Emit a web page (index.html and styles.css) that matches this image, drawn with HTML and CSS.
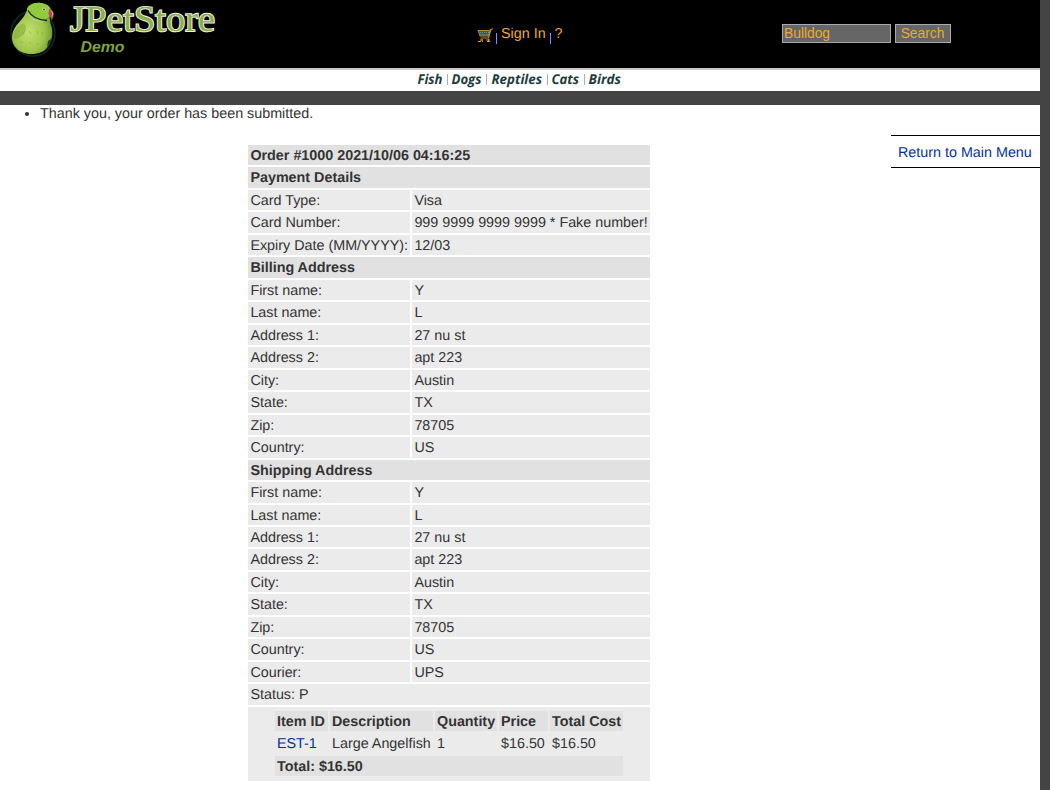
FILE: index.html
```html
<!DOCTYPE html>
<html lang="en">
<head>
<meta charset="utf-8">
<title>JPetStore Demo</title>
<link rel="stylesheet" href="styles.css">
</head>
<body>
<div class="page">
  <header class="header">
    <a class="logo">
      <svg width="230" height="66" viewBox="0 0 230 66">
        <defs>
          <radialGradient id="belly" cx=".42" cy=".58" r=".62">
            <stop offset="0" stop-color="#c3e070"/>
            <stop offset=".6" stop-color="#a0c64b"/>
            <stop offset="1" stop-color="#6b942f"/>
          </radialGradient>
        </defs>
        <ellipse cx="33" cy="33.500" rx="22" ry="22.500" fill="#04090a" stroke="#10272c" stroke-width="1.500"/>
        <path d="M27 10C27 5 34 2 41 3C48 4 52 8 51 13C49 17 50 19 50.500 24C54 31 52.500 43 46 49C40 55.500 24 56 17 49C10 42 11 33 16 26C20 21 24 18 27 10Z" fill="url(#belly)"/>
        <path d="M27 11C27 5 34 2 41 3C48 4 52 8 51 13C49 18 45 20 40 19.500C34 19 30 16 27 11Z" fill="#8fcb3c"/>
        <path d="M18 27C22 23 25 22 26 28C26 34 20 38 14 39C13 34 14 31 18 27Z" fill="#7fac38" opacity=".55"/>
        <path d="M48 41C51 39 52 38 52 36C52 41 50 45 47 47Z" fill="#27421d"/>
        <path d="M28 10.500C31 16 37 20 47 20.500" fill="none" stroke="#1b2b1c" stroke-width="1.300"/>
        <path d="M27.500 13C31 18.500 36 21.500 43 22" fill="none" stroke="#b7cdbd" stroke-width=".8"/>
        <path d="M49.500 9C54.500 9.500 55 16 51.500 20.500C51.500 17 48.500 16 48.500 13Z" fill="#b04a58"/>
        <path d="M50.500 10.500C52.500 11.500 53.300 14 52 16.500" fill="none" stroke="#e8a3a5" stroke-width="1"/>
        <circle cx="44" cy="9.500" r="1.700" fill="#e3dfb0"/>
        <circle cx="44" cy="9.500" r=".9" fill="#263123"/>
        <path d="M22 32l2 2m5-3l2 3m6-3l1 3m5-2l-1 3M20 41l3 2m6-1l2 2m7-1l-1 2" fill="none" stroke="#7c9c3e" stroke-width="1" opacity=".5"/>
        <text class="logo-name" x="70" y="31" textLength="145" lengthAdjust="spacingAndGlyphs">JPetStore</text>
        <text class="logo-demo" x="80.500" y="51.500" textLength="44" lengthAdjust="spacingAndGlyphs">Demo</text>
      </svg>
    </a>
    <nav class="account">
      <svg class="cart" width="17" height="15" viewBox="0 0 17 15">
        <path d="M1 2.500H13L11.500 8H3Z" fill="#2f5c55" stroke="#b98a2f" stroke-width="1"/>
        <path d="M3 4.500h9M3.500 6.500h8" stroke="#71917b" stroke-width="1" stroke-dasharray="1 1"/>
        <path d="M16 .7L13.800 1.500L11.500 10H3.500" fill="none" stroke="#c18d2e" stroke-width="1.200"/>
        <path d="M1 13.500h3M5 13.500h1M10 13.500h3M3 12h3M9 12h4M5 11v2M11.500 11v3" stroke="#d79c39" stroke-width="1"/>
      </svg>
      <i class="bar"></i><a class="gold">Sign In</a><i class="bar bar-help"></i><a class="gold">?</a>
    </nav>
    <form class="search">
      <input class="field" type="text" value="Bulldog" aria-label="Search">
      <button class="go" type="button">Search</button>
    </form>
  </header>
  <nav class="quick">
    <svg width="206" height="21" viewBox="0 0 206 21">
      <g class="quick-text">
        <text x="0.500" y="13.500" textLength="25" lengthAdjust="spacingAndGlyphs">Fish</text>
        <text x="34.500" y="13.500" textLength="30" lengthAdjust="spacingAndGlyphs">Dogs</text>
        <text x="74.500" y="13.500" textLength="50.500" lengthAdjust="spacingAndGlyphs">Reptiles</text>
        <text x="134.500" y="13.500" textLength="27.500" lengthAdjust="spacingAndGlyphs">Cats</text>
        <text x="171.500" y="13.500" textLength="32.500" lengthAdjust="spacingAndGlyphs">Birds</text>
      </g>
      <path d="M30.500 4v11M69.500 4v11M130.500 4v11M167.500 4v11" stroke="#a5a5f5"/>
    </svg>
  </nav>
  <div class="band"></div>
  <main class="content">
    <ul class="messages"><li>Thank you, your order has been submitted.</li></ul>
    <div class="back"><a>Return to Main Menu</a></div>
    <section class="order">
      <div class="head">Order #1000 2021/10/06 04:16:25</div>
      <div class="head">Payment Details</div>
      <div>Card Type:</div><div>Visa</div>
      <div>Card Number:</div><div>999 9999 9999 9999 * Fake number!</div>
      <div>Expiry Date (MM/YYYY):</div><div>12/03</div>
      <div class="head">Billing Address</div>
      <div>First name:</div><div>Y</div>
      <div>Last name:</div><div>L</div>
      <div>Address 1:</div><div>27 nu st</div>
      <div>Address 2:</div><div>apt 223</div>
      <div>City:</div><div>Austin</div>
      <div>State:</div><div>TX</div>
      <div>Zip:</div><div>78705</div>
      <div>Country:</div><div>US</div>
      <div class="head">Shipping Address</div>
      <div>First name:</div><div>Y</div>
      <div>Last name:</div><div>L</div>
      <div>Address 1:</div><div>27 nu st</div>
      <div>Address 2:</div><div>apt 223</div>
      <div>City:</div><div>Austin</div>
      <div>State:</div><div>TX</div>
      <div>Zip:</div><div>78705</div>
      <div>Country:</div><div>US</div>
      <div>Courier:</div><div>UPS</div>
      <div class="wide">Status: P</div>
      <div class="wide items-cell">
        <div class="items">
          <b>Item ID</b><b>Description</b><b>Quantity</b><b>Price</b><b>Total Cost</b>
          <span><a>EST-1</a></span><span>Large Angelfish</span><span>1</span><span>$16.50</span><span>$16.50</span>
          <b class="total">Total: $16.50</b>
        </div>
      </div>
    </section>
  </main>
</div>
</body>
</html>
```

FILE: styles.css
```css
* { box-sizing: border-box; }
body {
  margin: 0;
  height: 790px;
  overflow: hidden;
  background: #444;
  color: #333;
  font: 14.33px/22.6px "Liberation Sans", Arial, sans-serif;
  text-rendering: geometricPrecision;
}
.page { width: 1040px; height: 790px; background: #fff; }
a { color: #039; }
.header {
  display: grid;
  grid-template-columns: 477px 305px 1fr;
  height: 70px;
  background: #000;
  border-bottom: 2px solid #ccc;
}
.logo { height: 66px; }
.logo svg { display: block; }
.logo-name {
  font: 36.5px "Liberation Serif", serif;
  fill: #8fae45;
  stroke: #eef3ee;
  stroke-width: 1.9px;
  paint-order: stroke;
}
.logo-demo { font: italic bold 15.5px "Liberation Sans", sans-serif; fill: #7fa23c; }
.account { display: flex; align-items: flex-start; padding-top: 23px; }
.cart { margin-top: 5px; }
.bar { width: 1px; height: 11px; margin: 10px 4px 0 2px; background: #88f; }
.bar-help { margin: 10px 4px 0 4px; }
.account .gold { color: #eaac2f; }
.search { display: flex; gap: 4px; padding-top: 24px; }
.field, .go {
  height: 19px;
  margin: 0;
  border: 1px solid #aaa;
  border-radius: 0;
  background: #666;
  color: #eaac2f;
  font: 13.8px/16px "Liberation Sans", Arial, sans-serif;
}
.field { width: 109px; padding: 0 1px 1px; }
.go { width: 56px; padding: 1px 1px 0 0; }
.quick { display: flex; height: 21px; padding-left: 417px; }
.quick-text { font: italic bold 13.6px "Open Sans", sans-serif; fill: #213b3b; }
.band { height: 14px; background: #444; }
.content {
  display: grid;
  grid-template-columns: 248px 402px 1fr;
  grid-template-rows: 40px 1fr;
}
.messages { grid-column: 1 / 3; margin: 0; padding: 0 0 0 40px; line-height: 18.6px; }
.back {
  grid-column: 3;
  grid-row: 1 / 3;
  justify-self: end;
  width: 149px;
  height: 33px;
  margin-top: 30px;
  padding-left: 7px;
  border: solid #000;
  border-width: 1px 0;
  line-height: 34px;
  white-space: nowrap;
}
.order {
  grid-column: 2;
  grid-row: 2;
  display: grid;
  grid-template-columns: 162px 238px;
  grid-auto-rows: 20.48px;
  gap: 2px;
  white-space: nowrap;
}
.order > div { padding: 0 2px 0 2.4px; background: #ebebeb; }
.order > .head { grid-column: 1 / 3; background: #e1e1e1; font-weight: bold; }
.order > .wide { grid-column: 1 / 3; }
.order > .items-cell { height: 74px; padding: 4px 27px; }
.items {
  display: grid;
  grid-template-columns: 53px 103px 62px 49px 73px;
  grid-auto-rows: 20.48px;
  gap: 2px;
}
.items > * { padding: 0 2px; }
.items b { background: #e1e1e1; }
.items .total { grid-column: 1 / 6; }
```
